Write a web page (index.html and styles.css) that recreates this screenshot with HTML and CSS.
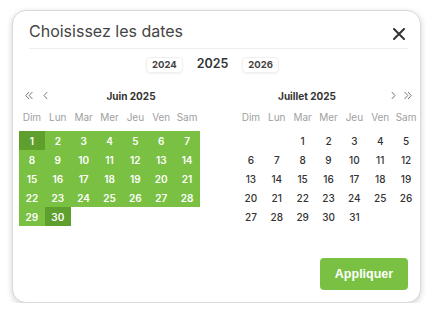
FILE: index.html
```html
<!DOCTYPE html>
<html lang="fr">
<head>
<meta charset="utf-8">
<title>Choisissez les dates</title>
<link rel="stylesheet" href="styles.css">
</head>
<body>
<div class="card">
  <div class="header">
    <h1 class="title">Choisissez les dates</h1>
    <button class="close" aria-label="Fermer">
      <svg width="12" height="12" viewBox="0 0 12 12"><path d="M1 1 L11 11 M11 1 L1 11" stroke="#333" stroke-width="2" stroke-linecap="round"/></svg>
    </button>
  </div>
  <div class="years">
    <span class="year-chip">2024</span>
    <span class="year-current">2025</span>
    <span class="year-chip">2026</span>
  </div>
  <div class="months">
    <div class="month">
      <div class="month-head left">
        <div class="nav">
          <svg width="8" height="9" viewBox="0 0 8 9"><path d="M4 1 L0.8 4.5 L4 8 M7.4 1 L4.2 4.5 L7.4 8" fill="none" stroke="#777" stroke-width="1"/></svg>
          <svg width="5" height="9" viewBox="0 0 5 9"><path d="M4.2 1 L1 4.5 L4.2 8" fill="none" stroke="#777" stroke-width="1"/></svg>
        </div>
        <div class="month-title">Juin 2025</div>
      </div>
      <div class="weekdays">
        <span>Dim</span><span>Lun</span><span>Mar</span><span>Mer</span><span>Jeu</span><span>Ven</span><span>Sam</span>
      </div>
      <div class="days range">
        <span class="sel">1</span><span>2</span><span>3</span><span>4</span><span>5</span><span>6</span><span>7</span>
        <span>8</span><span>9</span><span>10</span><span>11</span><span>12</span><span>13</span><span>14</span>
        <span>15</span><span>16</span><span>17</span><span>18</span><span>19</span><span>20</span><span>21</span>
        <span>22</span><span>23</span><span>24</span><span>25</span><span>26</span><span>27</span><span>28</span>
        <span>29</span><span class="sel">30</span>
      </div>
    </div>
    <div class="month">
      <div class="month-head right">
        <div class="month-title">Juillet 2025</div>
        <div class="nav">
          <svg width="5" height="9" viewBox="0 0 5 9"><path d="M0.8 1 L4 4.5 L0.8 8" fill="none" stroke="#777" stroke-width="1"/></svg>
          <svg width="8" height="9" viewBox="0 0 8 9"><path d="M0.6 1 L3.8 4.5 L0.6 8 M4 1 L7.2 4.5 L4 8" fill="none" stroke="#777" stroke-width="1"/></svg>
        </div>
      </div>
      <div class="weekdays">
        <span>Dim</span><span>Lun</span><span>Mar</span><span>Mer</span><span>Jeu</span><span>Ven</span><span>Sam</span>
      </div>
      <div class="days plain">
        <span class="empty"></span><span class="empty"></span><span>1</span><span>2</span><span>3</span><span>4</span><span>5</span>
        <span>6</span><span>7</span><span>8</span><span>9</span><span>10</span><span>11</span><span>12</span>
        <span>13</span><span>14</span><span>15</span><span>16</span><span>17</span><span>18</span><span>19</span>
        <span>20</span><span>21</span><span>22</span><span>23</span><span>24</span><span>25</span><span>26</span>
        <span>27</span><span>28</span><span>29</span><span>30</span><span>31</span>
      </div>
    </div>
  </div>
  <div class="footer">
    <button class="apply">Appliquer</button>
  </div>
</div>
</body>
</html>
```

FILE: styles.css
```css
* { box-sizing: border-box; }
html, body { margin: 0; padding: 0; background: #fff; }
body { font-family: Inter, "Noto Sans", sans-serif; color: #333; }

.card {
  margin: 10px 0 0 12px;
  width: 409px;
  height: 293px;
  border: 1px solid #d9d9d9;
  border-radius: 14px;
  box-shadow: 0 2px 6px rgba(0, 0, 0, 0.18);
  background: #fff;
  display: flex;
  flex-direction: column;
}

.header {
  margin: 0 12px 0 16px;
  padding-top: 10px;
  height: 38px;
  border-bottom: 1px solid #eeeeee;
  display: flex;
  justify-content: space-between;
  align-items: flex-start;
}
.title {
  margin: 0;
  font-size: 16px;
  line-height: 20px;
  font-weight: 400;
  color: #444;
}
.close {
  border: 0;
  background: none;
  padding: 0;
  margin: 7px 3px 0 0;
  width: 12px;
  height: 12px;
  display: flex;
}

.years {
  display: flex;
  align-items: center;
  gap: 14px;
  margin: 8px 0 0 133px;
  height: 16px;
}
.year-chip {
  font-size: 9.5px;
  font-weight: 700;
  color: #444;
  padding: 0 5px;
  height: 16px;
  line-height: 14px;
  border: 1px solid #f0f0f0;
  border-radius: 4px;
  box-shadow: 0 1px 2px rgba(0, 0, 0, 0.06);
}
.year-current {
  font-size: 12.5px;
  font-weight: 600;
  color: #333;
  line-height: 16px;
  margin-top: -2px;
}

.months {
  display: flex;
  gap: 38px;
  margin: 15px 0 0 6px;
  width: 400px;
}
.month { width: 181px; }

.month-head {
  display: flex;
  align-items: center;
  height: 15px;
}
.month-title {
  flex: 1;
  text-align: center;
  font-size: 10px;
  font-weight: 700;
  color: #333;
}
.month-head.left .nav {
  width: 31px;
  padding-left: 6px;
  display: flex;
  align-items: center;
  gap: 10px;
}
.month-head.left .month-title { padding-left: 12px; }
.month-head.right .month-title { padding-right: 12px; }
.month-head.right .nav {
  width: 31px;
  padding-left: 3px;
  display: flex;
  align-items: center;
  gap: 8px;
}
.nav svg { display: block; }

.weekdays {
  display: grid;
  grid-template-columns: repeat(7, 1fr);
  margin-top: 6px;
  height: 16px;
  align-items: center;
}
.weekdays span {
  text-align: center;
  font-size: 10px;
  color: #a0a0a0;
}

.days {
  display: grid;
  grid-template-columns: repeat(7, 1fr);
  grid-auto-rows: 19px;
  margin-top: 6px;
}
.days span {
  display: flex;
  align-items: center;
  justify-content: center;
  font-size: 10px;
}
.days.range span {
  background: #7ac143;
  color: #fff;
  font-weight: 600;
}
.days.range span.sel { background: #5f9f2d; }
.days.plain span {
  color: #333;
  font-weight: 500;
}

.footer {
  margin-top: auto;
  display: flex;
  justify-content: flex-end;
  padding: 0 12px 12px 0;
}
.apply {
  width: 88px;
  height: 32px;
  border: 0;
  border-radius: 4px;
  background: #7ac143;
  color: #fff;
  font-family: "Liberation Sans", Arial, sans-serif;
  font-weight: 700;
  font-size: 12.5px;
}
```
